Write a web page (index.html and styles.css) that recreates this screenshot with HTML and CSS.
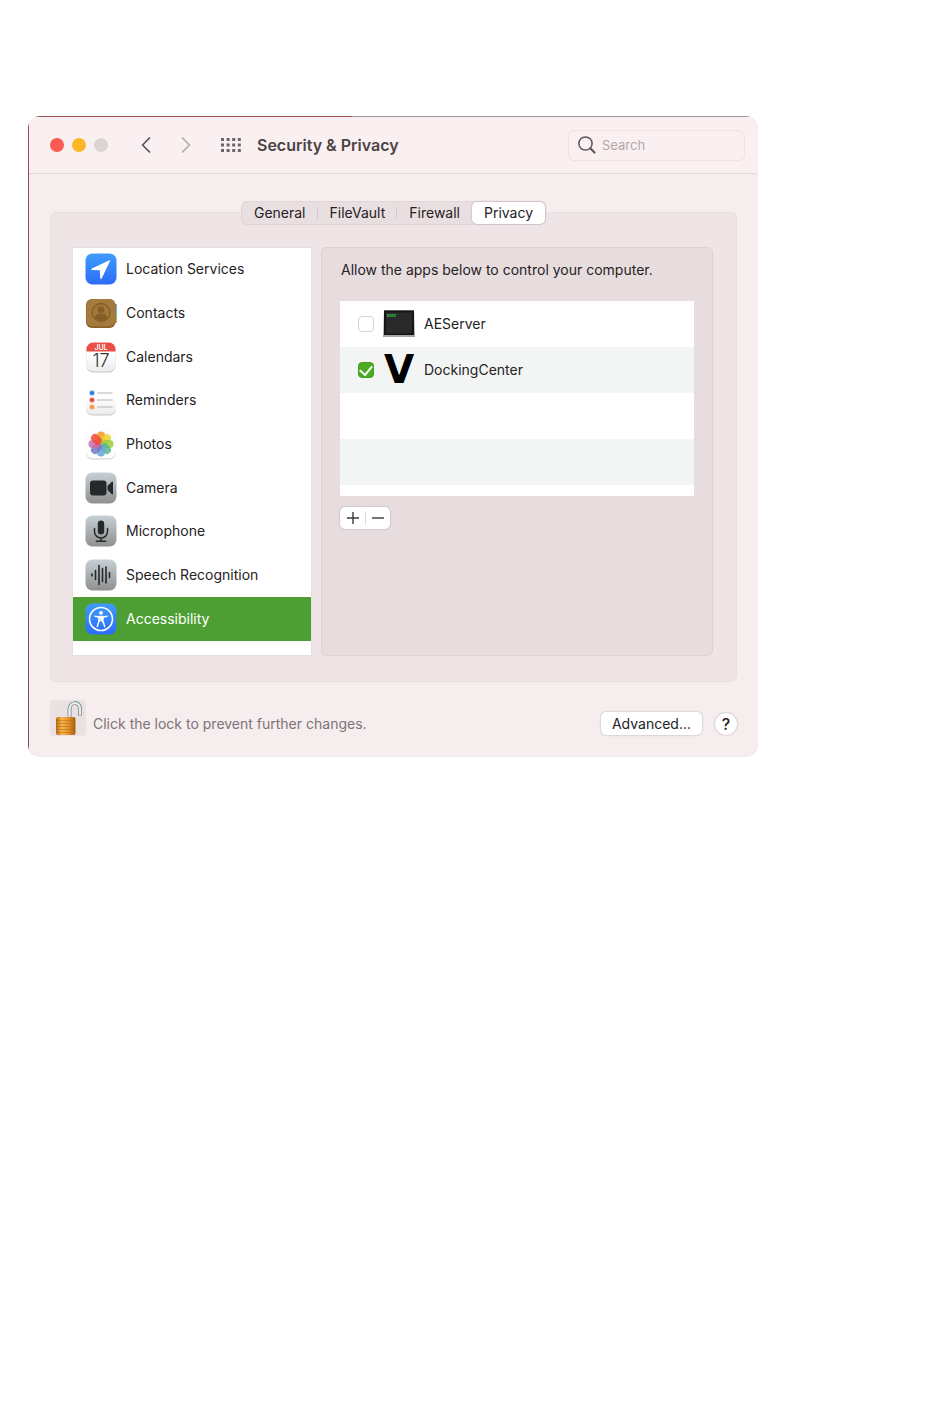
FILE: index.html
```html
<!DOCTYPE html>
<html lang="en">
<head>
	<meta charset="UTF-8">
	<meta name="viewport" content="width=device-width, initial-scale=1.0">
	<title>Security &amp; Privacy</title>
	<link rel="stylesheet" href="styles.css">
</head>
<body>

	<main class="window">
		<header class="titlebar">
			<div class="lights">
				<button class="light red" aria-label="Close"></button>
				<button class="light yellow" aria-label="Minimize"></button>
				<button class="light grey" aria-label="Zoom" disabled></button>
			</div>
			<div class="history">
				<button class="icon_btn" aria-label="Back">
					<svg width="12" height="18" viewBox="0 0 12 18"><path d="M9.500 2L2.500 9l7 7" fill="none" stroke="#5b5356" stroke-width="1.700" stroke-linecap="round" stroke-linejoin="round"/></svg>
				</button>
				<button class="icon_btn" aria-label="Forward">
					<svg width="12" height="18" viewBox="0 0 12 18"><path d="M2.500 2l7 7-7 7" fill="none" stroke="#b5abad" stroke-width="1.700" stroke-linecap="round" stroke-linejoin="round"/></svg>
				</button>
			</div>
			<button class="icon_btn" aria-label="Show all">
				<svg width="20" height="16" viewBox="0 0 20 16" fill="none" stroke="#6b6365" stroke-width="3" stroke-dasharray="3 2.600"><path d="M0 2.500h20M0 8h20M0 13.500h20"/></svg>
			</button>
			<h1>Security &amp; Privacy</h1>
			<label class="search">
				<svg width="20" height="20" viewBox="0 0 20 20" fill="none" stroke="#5e5658"><circle cx="8.500" cy="8.500" r="6.600" stroke-width="1.500"/><path d="M13.300 13.300l4.200 4.200" stroke-width="2.200" stroke-linecap="round"/></svg>
				<input type="text" placeholder="Search" aria-label="Search">
			</label>
		</header>

		<div class="content">
			<div class="tabs" role="tablist">
				<button role="tab">General</button>
				<button role="tab">FileVault</button>
				<button role="tab">Firewall</button>
				<button role="tab" class="active" aria-selected="true">Privacy</button>
			</div>

			<section class="panel">
				<nav class="sidebar">
					<a href="#location">
						<svg class="icon" viewBox="0 0 32 32">
							<defs><linearGradient id="blue" x2="0" y2="1"><stop stop-color="#3f9cfb"/><stop offset="1" stop-color="#2c6cfa"/></linearGradient></defs>
							<rect x=".5" y=".5" width="31" height="31" rx="7" fill="url(#blue)"/>
							<path d="M24.500 7.300L6.800 15.500c-.8.400-.6 1.400.3 1.500l7.800.2.300 7.900c0 .9 1.100 1.100 1.500.3L25 7.900c.2-.5-.1-.8-.5-.6z" fill="#fff"/>
						</svg>
						<span>Location Services</span>
					</a>
					<a href="#contacts">
						<svg class="icon" viewBox="0 0 32 32">
							<path d="M29 7h2.800v5H29z" fill="#8d9295"/><path d="M29 12h2.800v5H29z" fill="#5a9bb8"/><path d="M29 17h2.800v5H29z" fill="#7aa75b"/><path d="M29 22h2.800v4H29z" fill="#c99545"/>
							<rect x="1" y="2" width="29.500" height="29" rx="6" fill="#866027"/>
							<rect x="1.500" y="2" width="28.500" height="27.500" rx="6" fill="#a57a3c"/>
							<circle cx="16" cy="15.500" r="9" fill="#a17637" stroke="#835e29" stroke-width="1.300"/>
							<circle cx="16" cy="12.700" r="3.300" fill="#835e29"/>
							<path d="M9.700 20.800c1-3.500 3.500-4.200 6.300-4.200s5.300.7 6.300 4.200c-3.500 3.800-9.100 3.800-12.600 0z" fill="#835e29"/>
						</svg>
						<span>Contacts</span>
					</a>
					<a href="#calendars">
						<svg class="icon" viewBox="0 0 32 32">
							<defs><linearGradient id="paper" x2="0" y2="1"><stop offset=".4" stop-color="#fff"/><stop offset="1" stop-color="#ececec"/></linearGradient></defs>
							<rect x="1.500" y="2.500" width="29" height="29" rx="6.500" fill="#c6c6c6"/>
							<rect x="1.500" y="1.500" width="29" height="29" rx="6.500" fill="url(#paper)"/>
							<path d="M1.500 10.500V8A6.500 6.500 0 018 1.500h16A6.500 6.500 0 0130.500 8v2.500z" fill="#eb4d47"/>
							<text class="cal_month" x="16" y="8.500">JUL</text>
							<text class="cal_day" x="16" y="26">17</text>
						</svg>
						<span>Calendars</span>
					</a>
					<a href="#reminders">
						<svg class="icon" viewBox="0 0 32 32">
							<rect x="1" y="2.500" width="30" height="29" rx="6.500" fill="#c9c7c7"/>
							<rect x="1" y="1.500" width="30" height="29" rx="6.500" fill="url(#paper)"/>
							<path d="M12 9h15.500M12 16h15.500M12 23h15.500" stroke="#b5b5b5"/>
							<g stroke-opacity=".35" stroke-width="1.800"><circle cx="7" cy="9" r="2.100" fill="#2b7de4" stroke="#2b7de4"/><circle cx="7" cy="16" r="2.100" fill="#e2443f" stroke="#e2443f"/><circle cx="7" cy="23" r="2.100" fill="#f49a3c" stroke="#f49a3c"/></g>
						</svg>
						<span>Reminders</span>
					</a>
					<a href="#photos">
						<svg class="icon" viewBox="0 0 32 32">
							<rect x="1" y="2.500" width="30" height="29" rx="6.500" fill="#cfcfcf"/>
							<rect x="1" y="1.500" width="30" height="29" rx="6.500" fill="#fdfdfd"/>
							<g class="petals">
								<rect x="12" y="3.500" width="8" height="12" rx="4" fill="#f59a22"/>
								<rect x="12" y="3.500" width="8" height="12" rx="4" fill="#e6d52c" transform="rotate(45 16 16)"/>
								<rect x="12" y="3.500" width="8" height="12" rx="4" fill="#9fcb3f" transform="rotate(90 16 16)"/>
								<rect x="12" y="3.500" width="8" height="12" rx="4" fill="#58b988" transform="rotate(135 16 16)"/>
								<rect x="12" y="3.500" width="8" height="12" rx="4" fill="#67a5d8" transform="rotate(180 16 16)"/>
								<rect x="12" y="3.500" width="8" height="12" rx="4" fill="#7775c4" transform="rotate(225 16 16)"/>
								<rect x="12" y="3.500" width="8" height="12" rx="4" fill="#c46da9" transform="rotate(270 16 16)"/>
								<rect x="12" y="3.500" width="8" height="12" rx="4" fill="#ee4a36" transform="rotate(315 16 16)"/>
							</g>
						</svg>
						<span>Photos</span>
					</a>
					<a href="#camera">
						<svg class="icon" viewBox="0 0 32 32">
							<defs><linearGradient id="steel" x2="0" y2="1"><stop stop-color="#c6d1d5"/><stop offset="1" stop-color="#8f8f8f"/></linearGradient></defs>
							<rect x=".5" y=".5" width="31" height="31" rx="7" fill="url(#steel)"/>
							<rect x="5" y="8.500" width="16.500" height="15" rx="3" fill="#262829"/>
							<path d="M22.500 14l4.300-4.300c.5-.5 1.200-.2 1.200.5v11.600c0 .7-.7 1-1.200.5L22.500 18z" fill="#262829"/>
						</svg>
						<span>Camera</span>
					</a>
					<a href="#microphone">
						<svg class="icon" viewBox="0 0 32 32">
							<rect x=".5" y=".5" width="31" height="31" rx="7" fill="url(#steel)"/>
							<rect x="12.800" y="5.500" width="6.400" height="14" rx="3.200" fill="#262829"/>
							<path d="M9.500 13.500v3a6.500 6.500 0 0013 0v-3M16 23v3M11.500 26.300h9" fill="none" stroke="#262829" stroke-width="1.500" stroke-linecap="round"/>
						</svg>
						<span>Microphone</span>
					</a>
					<a href="#speech">
						<svg class="icon" viewBox="0 0 32 32">
							<rect x=".5" y=".5" width="31" height="31" rx="7" fill="url(#steel)"/>
							<path d="M7 15v2M10.500 11.500v9M14 6.500v19M17.500 9.500v13M21 8v16M24.500 13.500v5" stroke="#262829" stroke-width="1.600" stroke-linecap="round"/>
						</svg>
						<span>Speech Recognition</span>
					</a>
					<a href="#accessibility" class="selected">
						<svg class="icon" viewBox="0 0 32 32">
							<rect x=".5" y=".5" width="31" height="31" rx="7" fill="url(#blue)"/>
							<circle cx="16" cy="16" r="11.500" fill="none" stroke="#fff" stroke-width="1.600"/>
							<circle cx="16" cy="9.800" r="1.900" fill="#fff"/>
							<path d="M10 13.200l4.500 1h3l4.500-1" fill="none" stroke="#fff" stroke-width="1.500" stroke-linecap="round" stroke-linejoin="round"/>
							<path d="M14 13.500h4v4.500l1.700 5.500M14 13.500V18l-1.700 5.500M14 18l2-1 2 1" fill="#fff" stroke="#fff" stroke-width="1.400" stroke-linecap="round" stroke-linejoin="round"/>
						</svg>
						<span>Accessibility</span>
					</a>
				</nav>

				<div class="detail">
					<p>Allow the apps below to control your computer.</p>
					<ul class="apps">
						<li>
							<input type="checkbox" id="aeserver">
							<label for="aeserver">
								<svg class="app_icon" viewBox="0 0 34 30">
									<path d="M2 1h30l1 27H1z" fill="#a5a5a5"/>
									<rect x="2" y="1.500" width="30" height="24.500" fill="#161616"/>
									<rect x="4" y="3.500" width="26" height="21" fill="#2a2a2a"/>
									<text class="exec" x="5" y="8">exec</text>
								</svg>
								AEServer
							</label>
						</li>
						<li>
							<input type="checkbox" id="docking" checked>
							<label for="docking">
								<span class="v_logo">V</span>
								DockingCenter
							</label>
						</li>
						<li></li>
						<li></li>
						<li></li>
					</ul>
					<div class="add_remove">
						<button aria-label="Add"><svg width="12" height="12" viewBox="0 0 12 12"><path d="M6 0v12M0 6h12" stroke="#3c3839" stroke-width="1.400"/></svg></button>
						<button aria-label="Remove"><svg width="12" height="12" viewBox="0 0 12 12"><path d="M0 6h12" stroke="#3c3839" stroke-width="1.400"/></svg></button>
					</div>
				</div>
			</section>

			<footer class="bottom">
				<button class="lock" aria-label="Lock">
					<svg width="36" height="36" viewBox="0 0 36 36">
						<defs><linearGradient id="gold"><stop stop-color="#b86a12"/><stop offset=".3" stop-color="#f6b54a"/><stop offset=".65" stop-color="#e2932a"/><stop offset="1" stop-color="#a9600f"/></linearGradient></defs>
						<path d="M19.500 18V10c0-9 10.500-9 10.500-1v6.500" fill="none" stroke="#7d898d" stroke-width="4"/>
						<path d="M19.500 18V10c0-9 10.500-9 10.500-1v6" fill="none" stroke="#e4ecee" stroke-width="2.400"/>
						<rect x="6" y="17" width="19.500" height="18" rx="2" fill="url(#gold)"/>
						<path d="M6.500 20.500h18.500M6.500 23.500h18.500M6.500 26.500h18.500M6.500 29.500h18.500M6.500 32.500h18.500" stroke="#a8610f" stroke-opacity=".45"/>
					</svg>
				</button>
				<span class="lock_text">Click the lock to prevent further changes.</span>
				<button class="advanced">Advanced...</button>
				<button class="help" aria-label="Help">?</button>
			</footer>
		</div>
	</main>

</body>
</html>
```
FILE: styles.css
```css
*{
	box-sizing: border-box;
}
body{
	margin: 0;
	padding: 116px 192px 40px 28px;
	background: #fff;
	font-family: Inter, "Liberation Sans", sans-serif;
	font-size: 14px;
	line-height: 20px;
	color: #262223;
}
button{
	font: inherit;
	color: inherit;
	border: none;
	padding: 0;
	background: none;
}
svg{
	display: block;
	flex: none;
}
/* the top and left edges pick up the wallpaper colour */
.window{
	border: 1px solid transparent;
	border-radius: 12px;
	background:
		linear-gradient(#f6edee, #f6edee) padding-box,
		linear-gradient(to right, #994e54 44.4%, #98979a 44.4%) top / 100% 1px no-repeat border-box,
		linear-gradient(#994e54, #74555b) left / 1px 100% no-repeat border-box,
		linear-gradient(#f3eaeb, #f3eaeb) border-box;
}
.titlebar{
	display: flex;
	align-items: center;
	height: 57px;
	padding: 0 12px 0 21px;
	background: #faf0f1;
	border-bottom: 1px solid #e2d8da;
	border-radius: 11px 11px 0 0;
}
.lights{
	display: flex;
	gap: 8px;
	margin-right: 32px;
}
.light{
	width: 14px;
	height: 14px;
	border-radius: 50%;
}
.red{
	background: #fb5a52;
}
.yellow{
	background: #fbb726;
}
.grey{
	background: #ddd3d5;
}
.history{
	display: flex;
	gap: 28px;
	margin-right: 29px;
}
h1{
	flex: 1;
	margin: 0 0 0 16px;
	font-size: 16px;
	font-weight: 600;
	color: #4b4446;
}
.search{
	display: flex;
	align-items: center;
	gap: 5px;
	width: 177px;
	height: 31px;
	padding: 0 8px;
	border: 1px solid #eee3e5;
	border-radius: 6px;
}
.search input{
	flex: 1;
	min-width: 0;
	padding: 0;
	border: none;
	outline: none;
	background: none;
	font: inherit;
	font-size: 13px;
}
.search input::placeholder{
	color: #b3a9ab;
}
.content{
	padding: 27px 20px 20px 21px;
}
.tabs{
	display: flex;
	position: relative;
	width: fit-content;
	height: 24px;
	margin: 0 auto -13px;
	border: 1px solid #e0d6d8;
	border-radius: 6px;
	background: #e9dfe1;
}
.tabs button{
	position: relative;
	padding: 0 12px;
	line-height: 22px;
}
.tabs button:nth-child(-n+2)::after{
	content: "";
	position: absolute;
	right: 0;
	top: 5px;
	width: 1px;
	height: 12px;
	background: #d3c9cb;
}
.tabs .active{
	background: #fff;
	border-radius: 5px;
	box-shadow: 0 0 2px #a79d9f;
}
.panel{
	display: flex;
	gap: 9px;
	height: 470px;
	padding: 34px 23px 25px 21px;
	border: 1px solid #e9dfe1;
	border-radius: 6px;
	background: #efe5e7;
}
.sidebar{
	display: grid;
	grid-auto-rows: 1fr;
	flex: 0 0 240px;
	padding-bottom: 14px;
	border: 1px solid #e6dee0;
	background: #fff;
}
.sidebar a{
	display: flex;
	align-items: center;
	gap: 9px;
	padding: 0 0 1px 12px;
	color: inherit;
	text-decoration: none;
}
.sidebar .selected{
	background: #4d9f33;
	color: #fff;
}
.icon{
	width: 32px;
	height: 32px;
}
.cal_month{
	font-size: 7px;
	font-weight: 600;
	fill: #fff;
	text-anchor: middle;
}
.cal_day{
	font-size: 18px;
	font-weight: 300;
	fill: #333;
	text-anchor: middle;
}
.petals rect{
	opacity: .85;
}
.detail{
	flex: 1;
	padding: 12px 18px;
	border: 1px solid #ddd3d5;
	border-radius: 5px;
	background: #e7dddf;
}
.detail p{
	margin: 0 1px 21px;
}
.apps{
	height: 195px;
	margin: 0 0 11px;
	padding: 0;
	overflow: hidden;
	list-style: none;
	background: #fff;
}
.apps li{
	display: flex;
	align-items: center;
	gap: 8px;
	height: 46px;
	padding-left: 18px;
}
.apps li:nth-child(even){
	background: #f3f5f4;
}
.apps label{
	display: flex;
	align-items: center;
	gap: 8px;
}
.apps input{
	appearance: none;
	display: grid;
	place-items: center;
	width: 16px;
	height: 16px;
	margin: 0;
	border: 1px solid #d3d3d3;
	border-radius: 4px;
	background: #fff;
}
.apps input:checked{
	border-color: #41a01c;
	background: #4aab22;
}
.apps input:checked::after{
	content: "";
	width: 6px;
	height: 10px;
	margin-bottom: 3px;
	border: solid #fff;
	border-width: 0 2px 2px 0;
	transform: rotate(40deg);
}
.app_icon{
	width: 34px;
	height: 30px;
}
.exec{
	font-size: 4px;
	font-weight: 700;
	fill: #35c44a;
}
.v_logo{
	width: 34px;
	line-height: 46px;
	font-family: "DejaVu Sans", sans-serif;
	font-size: 39px;
	font-weight: 700;
	text-align: center;
	color: #000;
}
.add_remove{
	display: flex;
	width: 50px;
	height: 22px;
	border-radius: 5px;
	background: #fff;
	box-shadow: 0 0 2px #a79d9f;
}
.add_remove button{
	display: grid;
	place-items: center;
	flex: 1;
}
.add_remove button + button{
	background: linear-gradient(#ddd, #ddd) left / 1px 14px no-repeat;
}
.bottom{
	display: flex;
	align-items: center;
	margin-top: 18px;
}
.lock{
	border-radius: 4px;
	background: #ebe1e3;
}
.lock_text{
	flex: 1;
	margin: 12px 0 0 7px;
	color: #7d7476;
}
.advanced{
	height: 23px;
	margin: 11px 13px 0 0;
	padding: 0 11px;
	border-radius: 5px;
	background: #fff;
	box-shadow: 0 0 2px #a79d9f;
}
.help{
	width: 22px;
	height: 22px;
	margin-top: 11px;
	border-radius: 50%;
	background: #fff;
	box-shadow: 0 0 2px #a79d9f;
	font-size: 16px;
	font-weight: 500;
}
```
